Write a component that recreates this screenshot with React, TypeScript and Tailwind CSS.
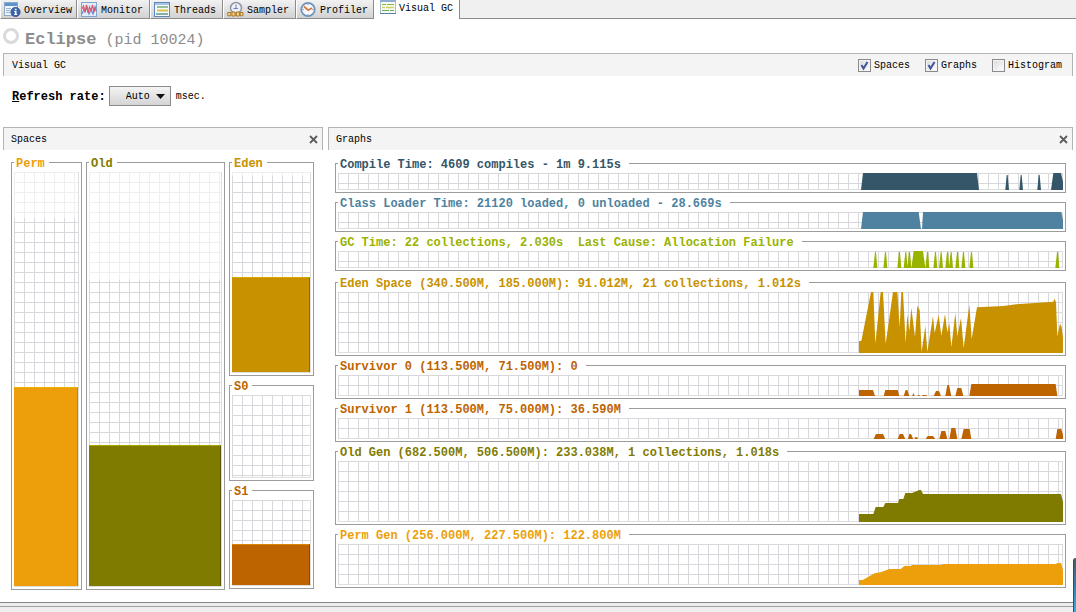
import React from 'react';

const mono = "font-['Liberation_Mono','Noto_Sans_CJK_SC',monospace]";

const gridLines =
  'border-r border-b border-[#dedede] bg-[linear-gradient(to_right,#d8d8dc_1px,transparent_1px),linear-gradient(to_bottom,#d8d8dc_1px,transparent_1px)] bg-size-[10px_10px]';

function OverviewIcon() {
  return (
    <svg width="17" height="17" viewBox="0 0 17 17" aria-hidden="true">
      <rect x="0.5" y="1.5" width="13" height="13" fill="#eef4fb" stroke="#8fa9c6" />
      <rect x="1" y="2" width="12" height="3" fill="#5f93cd" />
      <path d="M2 7.5h5M2 9.5h4M2 11.5h4" stroke="#9db4cc" />
      <circle cx="11.5" cy="11" r="4.6" fill="#3a66ae" stroke="#24488c" strokeWidth="0.8" />
      <path d="M10.8 7.8h1.8v1.5h-1.8zM10.2 10h2.3v3h0.7v0.9h-3.100v-0.900h0.800v-2.100h-0.700z" fill="#fff" />
    </svg>
  );
}

function MonitorIcon() {
  return (
    <svg width="17" height="17" viewBox="0 0 17 17" aria-hidden="true">
      <rect x="0.5" y="1.5" width="15" height="14" fill="#e3eefa" stroke="#7fa6d0" />
      <path d="M1 13L3 8l1 3 2-5 2 7 2-5 2 5 2-7 1 4" fill="none" stroke="#5c8ad0" strokeWidth="1.1" />
      <path d="M1 8l1.5-3L4 11l1.5-7L7 12l1.5-6L10 10l1.5-6L13 11l1.5-5" fill="none" stroke="#e0566a" strokeWidth="1.2" />
    </svg>
  );
}

function ThreadsIcon() {
  return (
    <svg width="17" height="17" viewBox="0 0 17 17" aria-hidden="true">
      <rect x="0.5" y="1.5" width="15" height="14" fill="#f4f8fc" stroke="#5c87b8" />
      <rect x="1" y="2" width="14" height="2" fill="#a9c4e2" />
      <path d="M3 6h11" stroke="#78a878" strokeWidth="1.5" />
      <path d="M3 9.5h11" stroke="#dcc24a" strokeWidth="2" />
      <path d="M2 13h12" stroke="#5f9a94" strokeWidth="1.5" />
    </svg>
  );
}

function SamplerIcon() {
  return (
    <svg width="17" height="17" viewBox="0 0 17 17" aria-hidden="true">
      <circle cx="9" cy="7" r="5.5" fill="#eef0f8" stroke="#8f96a2" strokeWidth="1.5" />
      <path d="M9 3.500V8M6.500 7.500H11" stroke="#6a86b8" fill="none" />
      <path d="M0.800 14.800v-3.300h3v3.300zM5 15v-4h3v4zM9.300 15v-4h3v4zM13.300 14.800v-3.300h2.700v3.300z" fill="#f6dc92" stroke="#a8742c" />
    </svg>
  );
}

function ProfilerIcon() {
  return (
    <svg width="17" height="17" viewBox="0 0 17 17" aria-hidden="true">
      <circle cx="8" cy="8.500" r="6.700" fill="#f5f8fc" stroke="#6d93b8" strokeWidth="1.800" />
      <path d="M8 3v1.200M8 13v1.200M2.700 8.500h1.200M12.200 8.500h1.200" stroke="#8a9aac" />
      <path d="M4 5.500l4.300 3.700L12 7" fill="none" stroke="#d77a3c" strokeWidth="1.800" />
    </svg>
  );
}

function VisualGcIcon() {
  return (
    <svg width="17" height="15" viewBox="0 0 17 15" aria-hidden="true">
      <rect x="0.500" y="0.500" width="15" height="13" fill="#f8fbf4" stroke="#a8bccc" />
      <rect x="0" y="0" width="16" height="2" fill="#8fadd4" />
      <path d="M2 4.500h4M7 4.500h7" stroke="#86b73c" />
      <path d="M2 7.500h3M6 7.500h8" stroke="#cdd45c" strokeWidth="1.500" />
      <path d="M2 10.500h7M10 10.500h4" stroke="#6cab55" />
      <path d="M0 13.500h16" stroke="#5d7f9f" />
    </svg>
  );
}

const tabs = [
  { label: 'Overview', icon: <OverviewIcon />, width: 'w-[77px]' },
  { label: 'Monitor', icon: <MonitorIcon />, width: 'w-[73px]' },
  { label: 'Threads', icon: <ThreadsIcon />, width: 'w-[73px]' },
  { label: 'Sampler', icon: <SamplerIcon />, width: 'w-[73px]' },
  { label: 'Profiler', icon: <ProfilerIcon />, width: 'w-[78px]' },
];

function TabBar() {
  return (
    <nav role="tablist" className="flex h-[19px] shrink-0 bg-[#f0f0f0]">
      {tabs.map((tab) => (
        <button
          key={tab.label}
          role="tab"
          aria-selected={false}
          className={`flex shrink-0 items-center gap-[3px] border-r border-b border-[#8c8c8c] border-l border-l-white bg-linear-to-b from-[#f2f2f2] to-[#d2d2d2] pl-[3px] ${tab.width}`}
        >
          {tab.icon}
          <span className="pt-[3px]">{tab.label}</span>
        </button>
      ))}
      <button role="tab" aria-selected className="flex w-[86px] shrink-0 items-start gap-0.5 border-r border-[#8c8c8c] bg-white pl-1.5">
        <VisualGcIcon />
        <span className="pt-px leading-4">Visual GC</span>
      </button>
      <div className="flex-1 border-b border-[#8c8c8c]" />
    </nav>
  );
}

function CheckOption({ label, checked }: { label: string; checked: boolean }) {
  return (
    <label className="flex items-center gap-[3px]">
      <span className="grid">
        <input
          type="checkbox"
          defaultChecked={checked}
          className="peer col-start-1 row-start-1 size-[13px] appearance-none border border-[#8a8a8a] bg-linear-to-br from-[#d6d9de] to-white shadow-[inset_0_0_0_1px_#f4f4f4]"
        />
        <svg
          viewBox="0 0 13 13"
          className="pointer-events-none invisible col-start-1 row-start-1 size-[13px] peer-checked:visible"
          aria-hidden="true"
        >
          <path d="M3.500 6l2 3.500L9.500 3" fill="none" stroke="#44529c" strokeWidth="2" />
        </svg>
      </span>
      <span className="pt-0.5">{label}</span>
    </label>
  );
}

function PanelHeader({ title }: { title: string }) {
  return (
    <header className="flex h-[23px] items-center justify-between border-x border-t border-[#b4b4b4] bg-[#f4f4f4] pr-[3px] pl-[7px]">
      <h2 className="pt-0.5">{title}</h2>
      <button aria-label={`Close ${title}`} className="p-px">
        <svg width="9" height="9" viewBox="0 0 9 9" aria-hidden="true">
          <path d="M1 1l7 7M8 1L1 8" stroke="#5c5c5c" strokeWidth="1.800" />
        </svg>
      </button>
    </header>
  );
}

type Space = {
  name: string;
  text: string;
  fill: string;
  box: string;
  uncommitted: number;
  used: number;
};

function SpaceBox({ name, text, fill, box, uncommitted, used }: Space) {
  return (
    <fieldset className={`min-h-0 min-w-0 border border-[#9c9c9c] px-0.5 pt-[3px] pb-0.5 ${box}`}>
      <legend className={`h-[13px] pr-1 pl-0.5 text-xs leading-4 font-bold ${text}`}>{name}</legend>
      <div className={`flex h-full flex-col justify-between ${gridLines}`}>
        <div className="bg-white/60" style={{ height: `${uncommitted}%` }} />
        <div className={used > 0 ? `border-t border-r ${fill}` : ''} style={{ height: `${used}%` }} />
      </div>
    </fieldset>
  );
}

const perm: Space = { name: 'Perm', text: 'text-[#ec9f0a]', fill: 'bg-[#ec9f0a] border-t-[#f0b000] border-r-[#c88408]', box: 'w-[71px]', uncommitted: 11, used: 48 };
const old: Space = { name: 'Old', text: 'text-[#7f7b00]', fill: 'bg-[#7f7b00] border-t-[#a8a400] border-r-[#5a5700]', box: 'flex-1', uncommitted: 26, used: 34 };
const young: Space[] = [
  { name: 'Eden', text: 'text-[#c79100]', fill: 'bg-[#c79100] border-t-[#dca800] border-r-[#936b00]', box: '', uncommitted: 2, used: 47.5 },
  { name: 'S0', text: 'text-[#bd6400]', fill: '', box: '', uncommitted: 0, used: 0 },
  { name: 'S1', text: 'text-[#bd6400]', fill: 'bg-[#bd6400] border-t-[#dc8400] border-r-[#8c4a00]', box: '', uncommitted: 0, used: 48.8 },
];

const gcSpikes = [106, 136, 178, 197, 208, 262, 286, 303, 322, 333, 352, 370, 394, 652]
  .map((x) => `M${x - 6} 339L${x - 1} 291H${x + 2}L${x + 6} 339Z`)
  .join('');

const compileSpikes = [501, 543, 597].map((x) => `M${x - 5} 105L${x - 1} 60H${x + 2}L${x + 6} 105Z`).join('');

type Graph = { title: string; text: string; height: string; viewBox: string; path: string };

const timeGraphs: Graph[] = [
  {
    title: 'Compile Time: 4609 compiles - 1m 9.115s',
    text: 'text-[#345668]',
    height: 'h-[17px]',
    viewBox: '57 54 612 51',
    path: `M63 105L69 54H411L417 105Z${compileSpikes}M633 105L640 54H663L669 80V105Z`,
  },
  {
    title: 'Class Loader Time: 21120 loaded, 0 unloaded - 28.669s',
    text: 'text-[#4e82a0]',
    height: 'h-[17px]',
    viewBox: '57 171 612 51',
    path: 'M63 222L69 171H236L243 222H246L249 171H664L669 195V222Z',
  },
  {
    title: 'GC Time: 22 collections, 2.030s  Last Cause: Allocation Failure',
    text: 'text-[#9ab300]',
    height: 'h-[17px]',
    viewBox: '57 288 612 51',
    path: `${gcSpikes}M214 339L221 288H249L256 339Z`,
  },
];

const heapGraphs: Graph[] = [
  {
    title: 'Eden Space (340.500M, 185.000M): 91.012M, 21 collections, 1.012s',
    text: 'text-[#c79100]',
    height: 'h-[61px]',
    viewBox: '57 51 612 183',
    path: 'M57 234V198H64L93 51H100L106 206L122 51H129L137 206L159 51H172L179 156L184 51H189L197 204L202 118L208 168L214 98L225 186L232 92L239 105L245 230L256 152L262 230L279 124L284 174L296 120L304 182L315 117L322 172L328 144L334 217L346 114L352 183L363 129L371 219L388 89L395 192L411 97L490 93L528 88L640 80L643 71L648 81L652 184L660 146L665 156L669 190V234Z',
  },
  {
    title: 'Survivor 0 (113.500M, 71.500M): 0',
    text: 'text-[#bd6400]',
    height: 'h-[21px]',
    viewBox: '57 300 612 63',
    path: 'M57 363V345H99L105 363ZM131 363L136 345H173L178 363ZM191 363L197 345H202L208 363ZM217 363L220 353L224 363ZM233 363V360H239V363ZM247 363V360H260V363ZM281 363L288 348H297L303 363ZM316 363L322 330H327L334 363ZM346 363L352 339H364L370 363ZM388 363L394 327H647L652 363Z',
  },
  {
    title: 'Survivor 1 (113.500M, 75.000M): 36.590M',
    text: 'text-[#bd6400]',
    height: 'h-[21px]',
    viewBox: '57 429 612 63',
    path: 'M101 492L108 477H129L136 492ZM173 492L179 477H189L196 492ZM204 492L208 477H213L220 492ZM224 492V487H233V492ZM257 492L263 483H279L286 492ZM298 492L304 468H316L322 492ZM328 492L334 459H346L352 492ZM364 492L371 462H389L394 492ZM647 492L652 462H664L669 480V492Z',
  },
  {
    title: 'Old Gen (682.500M, 506.500M): 233.038M, 1 collections, 1.018s',
    text: 'text-[#7f7b00]',
    height: 'h-[61px]',
    viewBox: '57 63 612 183',
    path: 'M57 246V222H100L107 201H130L136 189H174L178 177H190L196 159H216L238 150H243L249 162H663L669 185V246Z',
  },
  {
    title: 'Perm Gen (256.000M, 227.500M): 122.800M',
    text: 'text-[#ec9f0a]',
    height: 'h-[41px]',
    viewBox: '57 312 612 123',
    path: 'M57 435V420H68L104 400L122 397L148 387H182L193 378H211L217 375H300L312 372H648L652 369H663L669 390V435Z',
  },
];

function GraphBox({ title, text, height, viewBox, path }: Graph) {
  return (
    <fieldset className={`min-w-0 border border-[#9c9c9c] px-0.5 pt-[3px] pb-0.5 ${text}`}>
      <legend className="h-[13px] pr-2 pl-0.5 text-xs leading-4 font-bold whitespace-pre">{title}</legend>
      <div className={`flex justify-end bg-white ${gridLines} ${height}`}>
        <svg viewBox={viewBox} preserveAspectRatio="none" className={`-mr-px w-[204px] shrink-0 ${height}`} aria-hidden="true">
          <path d={path} fill="currentColor" />
        </svg>
      </div>
    </fieldset>
  );
}

export default function App() {
  return (
    <div className={`relative flex min-h-screen flex-col overflow-hidden bg-white text-[10px] leading-[14px] text-black ${mono}`}>
      <TabBar />

      <div className="flex h-[34px] items-center gap-1.5 pt-2 pl-[3px] text-[#8c8c8c]">
        <svg width="16" height="16" viewBox="0 0 16 16" className="mb-2" aria-hidden="true">
          <circle cx="8" cy="8" r="6.500" fill="none" stroke="#dadada" strokeWidth="3" />
        </svg>
        <h1 className="text-[15px]">
          <b className="text-[17px]">Eclipse</b> (pid 10024)
        </h1>
      </div>

      <div className="mx-[3px] flex h-[23px] items-center justify-between border-x border-t border-[#b4b4b4] bg-[#f4f4f4] pr-[10px] pl-2">
        <span className="pt-0.5">Visual GC</span>
        <div className="flex gap-[15px]">
          <CheckOption label="Spaces" checked />
          <CheckOption label="Graphs" checked />
          <CheckOption label="Histogram" checked={false} />
        </div>
      </div>

      <div className="flex items-center gap-[3px] pt-[10px] pb-[21px] pl-3">
        <label htmlFor="rate" className="pt-0.5 text-xs font-bold">
          <u>R</u>efresh rate:
        </label>
        <div className="relative">
          <select
            id="rate"
            defaultValue="Auto"
            className="block h-5 w-[62px] appearance-none border border-[#8c8c8c] bg-linear-to-b from-[#f4f4f4] to-[#d4d4d4] pt-0.5 pl-4"
          >
            <option>Auto</option>
          </select>
          <svg width="9" height="5" viewBox="0 0 9 5" className="pointer-events-none absolute top-2 right-1.5" aria-hidden="true">
            <path d="M0 0h9L4.500 5z" fill="#111" />
          </svg>
        </div>
        <span className="pt-0.5 pl-0.5">msec.</span>
      </div>

      <main className="flex gap-[5px] px-[3px]">
        <section className="flex w-80 shrink-0 flex-col">
          <PanelHeader title="Spaces" />
          <div className="flex flex-1 gap-1 pt-1.5 pr-[9px] pl-2">
            <SpaceBox {...perm} />
            <SpaceBox {...old} />
            <div className="grid w-[85px] grid-rows-[220fr_102fr_105fr] gap-[3px] pb-px">
              {young.map((space) => (
                <SpaceBox key={space.name} {...space} />
              ))}
            </div>
          </div>
        </section>

        <section className="min-w-0 flex-1">
          <PanelHeader title="Graphs" />
          <div className="flex flex-col gap-[5px] px-[7px] pt-[7px] pb-0.5">
            <div className="flex flex-col gap-[3px]">
              {timeGraphs.map((graph) => (
                <GraphBox key={graph.title} {...graph} />
              ))}
            </div>
            <div className="flex flex-col gap-[3px]">
              {heapGraphs.map((graph) => (
                <GraphBox key={graph.title} {...graph} />
              ))}
            </div>
          </div>
        </section>
      </main>

      <footer className="mt-3 flex flex-1 flex-col bg-[#eeeeee]">
        <div className="h-[5px] border-y border-t-[#858585] border-b-[#a0a0a0]" />
      </footer>

      <div className="absolute right-0 bottom-0 h-[54px] w-[3px] rounded-tl-sm border-l border-[#3c4a54] bg-linear-to-b from-[#4a5a64] via-[#2f7fae] to-[#38aee0]" />
    </div>
  );
}
